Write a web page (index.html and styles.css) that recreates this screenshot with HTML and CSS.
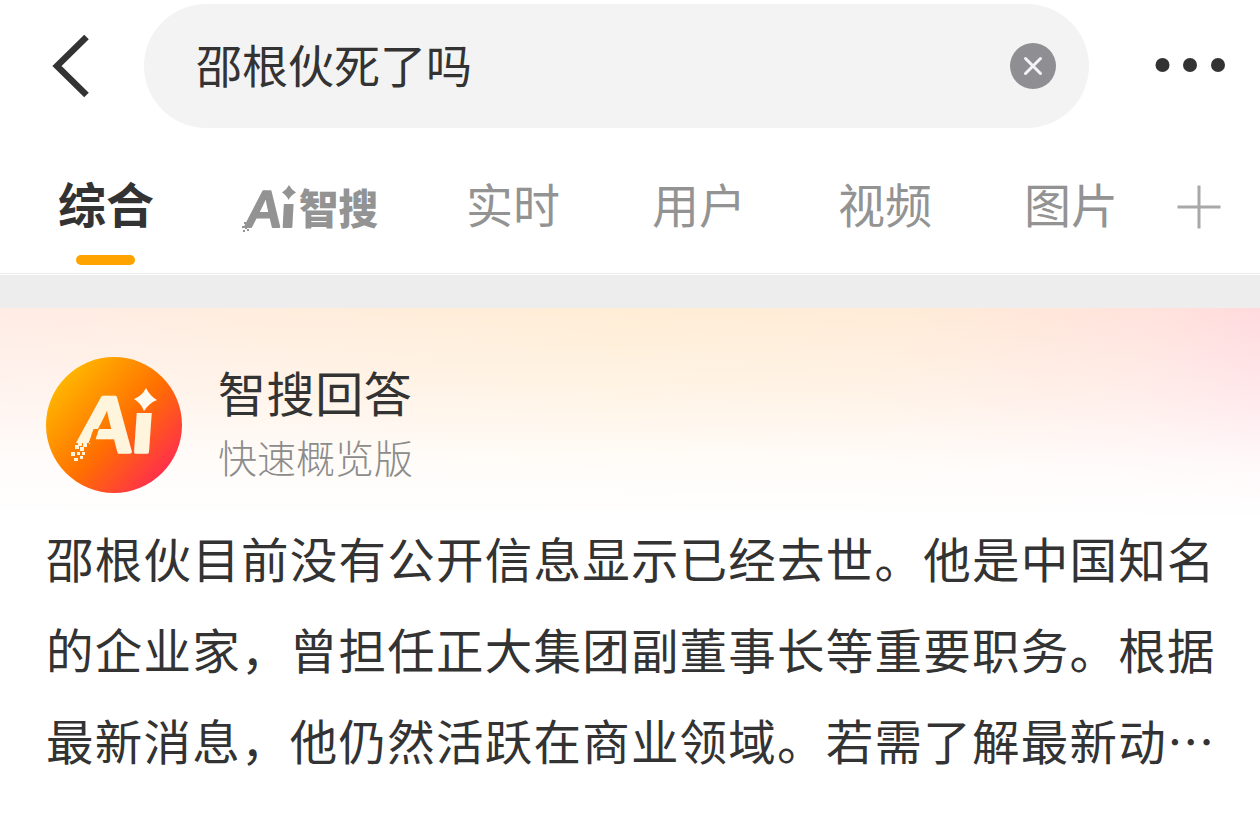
FILE: index.html
```html
<!DOCTYPE html>
<html lang="zh-CN">
<head>
<meta charset="utf-8">
<title>智搜</title>
<link rel="stylesheet" href="styles.css">
</head>
<body>
<header class="topbar">
  <svg class="back" viewBox="0 0 40 64" width="40" height="64"><path d="M36.500 3 L7 32 L36.500 61" fill="none" stroke="#333" stroke-width="6.500"/></svg>
  <div class="search">
    <span class="query">邵根伙死了吗</span>
    <svg class="clear" viewBox="0 0 46 46" width="46" height="46"><circle cx="23" cy="23" r="23" fill="#8f8f93"/><path d="M15.500 15.500 L30.500 30.500 M30.500 15.500 L15.500 30.500" stroke="#f4f4f4" stroke-width="3" stroke-linecap="round"/></svg>
  </div>
  <svg class="more" viewBox="0 0 70 14" width="70" height="14" fill="#333"><circle cx="7.500" cy="7" r="7"/><circle cx="35" cy="7" r="7"/><circle cx="63" cy="7" r="7"/></svg>
</header>
<nav class="tabs">
  <span class="tab active">综合</span>
  <span class="tab smart">
    <svg class="smart-logo" viewBox="0 0 142 70" width="142" height="70" fill="#939393">
      <clipPath id="tabStem"><rect x="0" y="28" width="142" height="42"/></clipPath>
      <g class="logo-letters" stroke="#939393" stroke-width="2" stroke-linejoin="round">
        <text transform="translate(3.500 51) skewX(-8)" font-size="49" textLength="37" lengthAdjust="spacingAndGlyphs">A</text>
        <g clip-path="url(#tabStem)"><text class="logo-stem" transform="translate(40.500 51) skewX(-3)" font-size="49" textLength="14" lengthAdjust="spacingAndGlyphs">i</text></g>
      </g>
      <path d="M49 9 Q51.500 14 56 16.500 Q51 19 48.500 24 Q46.500 19 42 16.500 Q46.500 14 49 9Z"/>
      <g><rect x="4" y="46" width="2" height="2"/><rect x="7" y="48" width="3" height="2"/><rect x="2" y="50" width="2" height="2"/><rect x="5" y="51" width="2" height="2"/><rect x="3" y="54" width="2" height="2"/><rect x="7" y="53" width="2" height="2"/></g>
      <text class="logo-name" x="59" y="47.500" font-size="41" textLength="79" lengthAdjust="spacingAndGlyphs">智搜</text>
    </svg>
  </span>
  <span class="tab">实时</span>
  <span class="tab">用户</span>
  <span class="tab">视频</span>
  <span class="tab">图片</span>
  <svg class="add" viewBox="0 0 44 44" width="44" height="44"><path d="M22 0.500V43.500M0.500 22H43.500" stroke="#a8a8a8" stroke-width="3"/></svg>
</nav>
<div class="gap"></div>
<main class="answer">
  <div class="author">
    <svg class="avatar" viewBox="0 0 136 136" width="136" height="136">
      <defs>
        <linearGradient id="disc" x1="0.100" y1="0.150" x2="0.880" y2="0.860"><stop offset="0" stop-color="#ffb800"/><stop offset="0.550" stop-color="#ff6f00"/><stop offset="1" stop-color="#ff2d4e"/></linearGradient>
        <clipPath id="stem"><rect x="60" y="56" width="76" height="60"/></clipPath>
        <clipPath id="legs"><path clip-rule="evenodd" d="M20 30H100V110H53L43 86H20Z M47.500 72L53 72L48.500 86L42.500 86Z"/></clipPath>
      </defs>
      <circle cx="68" cy="68" r="68" fill="url(#disc)"/>
      <g class="logo-letters" fill="#fff4dc" stroke="#fff4dc" stroke-width="3.500" stroke-linejoin="round">
        <g clip-path="url(#legs)"><text transform="translate(25 95) skewX(-8)" font-size="75" textLength="61" lengthAdjust="spacingAndGlyphs">A</text></g>
        <g clip-path="url(#stem)"><text class="logo-stem" transform="translate(85 95) skewX(-4)" font-size="75" textLength="21" lengthAdjust="spacingAndGlyphs">i</text></g>
      </g>
      <path fill="#fffaf0" d="M100 31 Q104 39 111 43 Q103 46 98 54 Q95 46 88 42 Q96 39 100 31Z"/>
      <g fill="#fff4dc"><rect x="32" y="85" width="4" height="4"/><rect x="37" y="86" width="4" height="4"/><rect x="29" y="88" width="4" height="4"/><rect x="34" y="90" width="4" height="4"/><rect x="25" y="95" width="4" height="4"/><rect x="31" y="95" width="3" height="3"/><rect x="36" y="95" width="3" height="3"/><rect x="28" y="101" width="4" height="3"/><rect x="34" y="99" width="3" height="3"/></g>
    </svg>
    <div class="titles">
      <div class="title">智搜回答</div>
      <div class="subtitle">快速概览版</div>
    </div>
  </div>
  <p class="body">邵根伙目前没有公开信息显示已经去世。他是中国知名<br>的企业家，曾担任正大集团副董事长等重要职务。根据<br>最新消息，他仍然活跃在商业领域。若需了解最新动<span class="dots">⋯</span></p>
</main>
</body>
</html>
```
FILE: styles.css
```css
* { box-sizing: border-box; }
body {
  margin: 0;
  width: 1260px;
  height: 822px;
  overflow: hidden;
  background: #fff;
  color: #333;
  font-family: "Noto Sans CJK SC", "Liberation Sans", sans-serif;
}
svg { display: block; flex: none; overflow: visible; }
.topbar {
  display: flex;
  align-items: center;
  height: 128px;
  padding: 4px 35px 0 50px;
}
.search {
  display: flex;
  align-items: center;
  justify-content: space-between;
  width: 945px;
  height: 124px;
  margin-left: 54px;
  padding: 0 33px 0 52px;
  border-radius: 62px;
  background: #f3f3f3;
}
.query { font-size: 46px; line-height: 60px; padding-bottom: 6px; white-space: nowrap; }
.more { margin-left: 66px; margin-top: -2px; }
.tabs {
  display: flex;
  height: 146px;
  padding: 0 39px 0 58px;
  border-bottom: 1px solid #ececec;
}
.tab {
  width: 94px;
  margin-right: 92px;
  padding-top: 40px;
  font-size: 47px;
  line-height: 70px;
  color: #939393;
  white-space: nowrap;
}
.tab.active {
  display: flex;
  flex-direction: column;
  align-items: center;
  width: 96px;
  margin-right: 86px;
  padding-top: 39px;
  font-size: 48px;
  font-weight: 700;
  color: #333;
}
.tab.active::after {
  content: "";
  width: 59px;
  height: 10px;
  margin-top: 18px;
  margin-right: 1px;
  border-radius: 5px;
  background: #ffa300;
}
.tab.smart { width: 142px; margin-right: 84px; padding-top: 48px; }
.tab:nth-child(6) { margin-right: 59px; }
.add { margin-top: 57px; }
.logo-letters { font-family: Inter, "Liberation Sans", sans-serif; font-weight: 500; }
.logo-stem { font-weight: 700; }
.logo-name { font-weight: 900; }
.gap { height: 33px; margin-top: 1px; background: #ededed; }
.answer {
  height: 514px;
  padding: 49px 0 0 46px;
  background:
    linear-gradient(180deg, rgba(255,255,255,0) 0, rgba(255,255,255,.4) 85px, rgba(255,255,255,.84) 155px, #fff 210px),
    linear-gradient(105deg, #ffece5 0, #ffeddd 20%, #ffedd5 45%, #ffebd7 65%, #ffe2dc 83%, #ffd3de 96%);
}
.author { display: flex; height: 136px; }
.titles { margin-left: 36px; padding-top: 0; }
.title { font-size: 48px; line-height: 70px; letter-spacing: .6px; margin-top: -1px; }
.subtitle { font-size: 39px; line-height: 60px; font-weight: 300; color: #8c8c8c; }
.body {
  margin: 19px 0 0;
  font-size: 47.5px;
  line-height: 91px;
  letter-spacing: 1.24px;
  white-space: nowrap;
}
```
